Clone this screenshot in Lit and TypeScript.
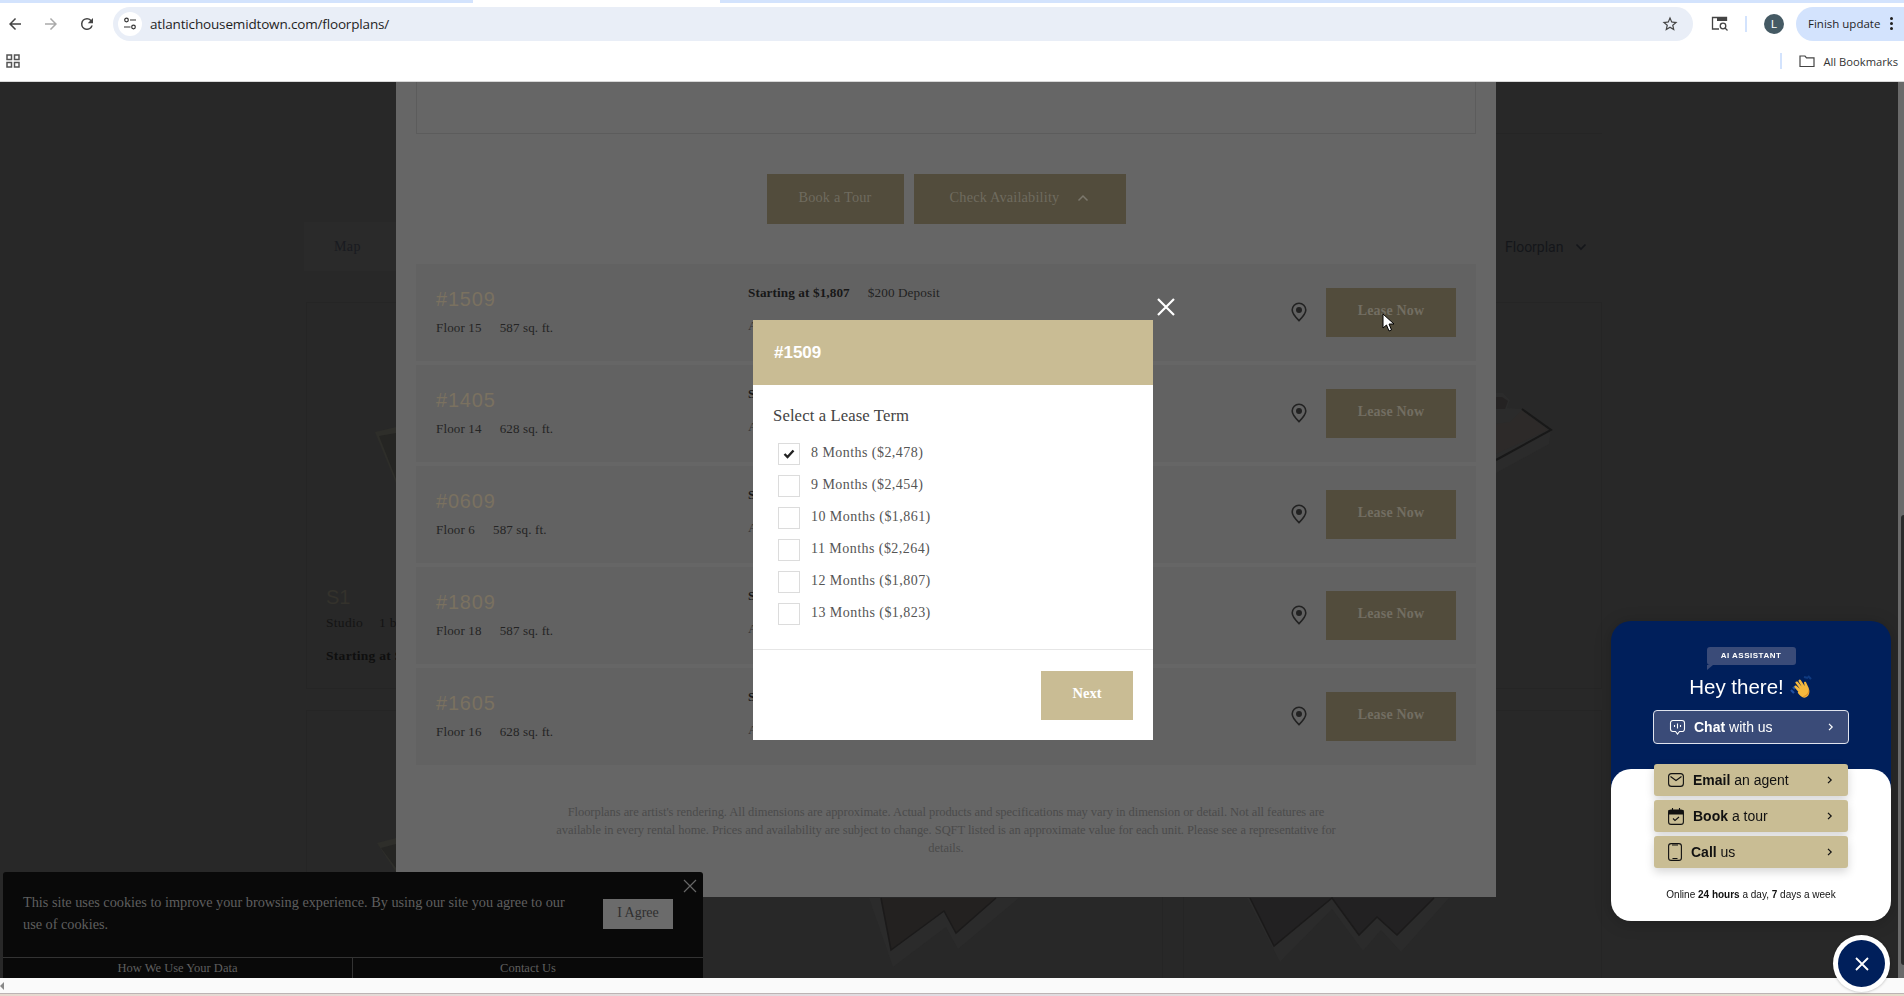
import { LitElement, html, css, svg } from "lit";
import { customElement } from "lit/decorators.js";

const units = [
  { id: "#1509", floor: "Floor 15", sq: "587 sq. ft." },
  { id: "#1405", floor: "Floor 14", sq: "628 sq. ft." },
  { id: "#0609", floor: "Floor 6", sq: "587 sq. ft." },
  { id: "#1809", floor: "Floor 18", sq: "587 sq. ft." },
  { id: "#1605", floor: "Floor 16", sq: "628 sq. ft." },
];
const terms = [
  "8 Months ($2,478)",
  "9 Months ($2,454)",
  "10 Months ($1,861)",
  "11 Months ($2,264)",
  "12 Months ($1,807)",
  "13 Months ($1,823)",
];

const chev = html`<svg class="chev" width="6" height="8" viewBox="0 0 6 8"><path d="M1 .8l3.200 3.200L1 7.200" fill="none" stroke="currentColor" stroke-width="1.200"/></svg>`;
const pin = html`<svg width="16" height="20" viewBox="0 0 16 20"><path d="M8 1.200A6.800 6.800 0 0 0 1.200 8c0 3.900 3.600 7.400 6.800 10.600C11.200 15.400 14.800 11.900 14.800 8A6.800 6.800 0 0 0 8 1.200z" fill="none" stroke="#222" stroke-width="1.600"/><circle cx="8" cy="8" r="3" fill="#222"/></svg>`;

@customElement("app-root")
export class AppRoot extends LitElement {
  static styles = css`
    :host { display: block; width: 1904px; height: 996px; overflow: hidden; position: relative; background: #fff; font-family: "Liberation Serif", serif; }
    * { box-sizing: border-box; }
    .strip { height: 3px; background: linear-gradient(90deg, #d3e3fd 0 473px, #fff 473px 720px, #d3e3fd 720px 1904px); }
    .toolbar { height: 40px; display: flex; align-items: center; padding: 2px 0 0 6px; background: #fff; }
    .nav { width: 36px; display: flex; align-items: center; }
    .address { margin-left: -1px; width: 1580px; height: 34px; border-radius: 17px; background: #e9eef7; display: flex; align-items: center; padding: 0 14px 0 5px; }
    .tune { width: 24px; height: 24px; border-radius: 50%; background: #fff; display: flex; align-items: center; justify-content: center; }
    .url { margin-left: 8px; font: 13.500px "Open Sans", sans-serif; letter-spacing: -0.16px; color: #1f1f1f; flex: 1; }
    .lens { margin-left: 18px; }
    .sep { width: 2px; height: 16px; background: #d3e3fd; margin: 0 17px 0 16px; }
    .avatar { width: 20px; height: 20px; border-radius: 50%; background: #455a64; color: #fff; font: 11px "Liberation Sans", sans-serif; display: flex; align-items: center; justify-content: center; }
    .update { margin-left: 12px; flex: 1; height: 34px; border-radius: 17px 0 0 17px; background: #d3e3fd; display: flex; align-items: center; padding: 0 0 1px 12px; font: 11.500px "Open Sans", sans-serif; color: #1f1f1f; gap: 10px; white-space: nowrap; }
    .dots { display: flex; flex-direction: column; gap: 2px; }
    .dots i { width: 3px; height: 3px; border-radius: 50%; background: #1f1f1f; display: block; }
    .bookmarks { height: 39px; display: flex; align-items: center; padding: 0 6px 2px; border-bottom: 1px solid #d8d8d8; background: #fff; }
    .bm-right { margin-left: auto; display: flex; align-items: center; font: 11.200px "Open Sans", sans-serif; color: #333; gap: 8px; }
    .bm-sep { width: 2px; height: 16px; background: #d3e3fd; margin-right: 9px; }

    .page { position: relative; height: 896px; background: #282828; overflow: hidden; display: flex; }
    .canvas { position: absolute; inset: 0; }
    .scrollv { position: absolute; right: 0; top: 0; bottom: 0; width: 6px; background: #6a6a6a; }
    .scrollv i { position: absolute; left: 3px; right: 0; top: 433px; height: 450px; background: #2a2a2a; border-radius: 3px 0 0 3px; display: block; }
    .tab-map { position: absolute; left: 304px; top: 140px; width: 92px; height: 49px; background: #2a2a2a; font-size: 14px; color: #191a20; display: flex; align-items: center; padding-left: 30px; letter-spacing: .4px; }
    .floorsel { position: absolute; left: 1505px; top: 157px; display: flex; align-items: center; gap: 12px; font: 14px Roboto, sans-serif; color: #14161a; }
    .s1 { position: absolute; left: 326px; top: 503px; color: #141414; font-size: 13.500px; letter-spacing: .3px; white-space: nowrap; }
    .s1 .code { font: 20px "Liberation Sans", sans-serif; color: #34322c; line-height: 24px; margin: 0; letter-spacing: 0; }
    .s1 .info { margin-top: 6px; display: flex; gap: 16px; }
    .s1 .start { margin-top: 17px; font-weight: 700; color: #0f0f0f; }

    .panel { position: relative; margin-left: 396px; width: 1100px; height: 815px; background: #666; padding: 0 20px; display: flex; flex-direction: column; }
    .topbox { height: 52px; border: 1px solid #5c5c5c; border-top: 0; }
    .cta { display: flex; justify-content: center; gap: 10px; margin-top: 40px; }
    .cta div { height: 50px; background: #524c3c; color: #6f6b5f; font-size: 14.300px; letter-spacing: .18px; display: flex; align-items: center; justify-content: center; padding-bottom: 3px; }
    .cta .tour { width: 137px; }
    .cta .check { width: 212px; gap: 18px; }
    .rows { margin-top: 40px; display: flex; flex-direction: column; gap: 4px; }
    .row { height: 97px; background: #626262; display: flex; align-items: flex-start; padding: 24px 20px 0; }
    .col1 { width: 312px; flex: none; color: #242424; }
    .code { font: 20px "Liberation Sans", sans-serif; letter-spacing: .8px; color: #7a7160; line-height: 24px; margin-top: -1px; }
    .meta { display: flex; gap: 18px; margin-top: 9px; font-size: 13px; letter-spacing: .15px; }
    .col2 { width: 543px; flex: none; margin-top: -5px; color: #222; font-size: 13.200px; letter-spacing: .1px; }
    .col2 .l1 { display: flex; gap: 18px; height: 20px; align-items: center; }
    .col2 b { color: #181818; }
    .col2 .l2 { margin-top: 15px; color: #333; }
    .pinbox { width: 35px; flex: none; margin-top: 14px; height: 20px; }
    .lease { width: 130px; flex: none; height: 49px; background: #524c3c; color: #726e62; font-size: 14px; letter-spacing: .2px; font-weight: 700; display: flex; align-items: center; justify-content: center; padding-bottom: 4px; }
    .legal { margin-top: 38px; text-align: center; font-size: 12.500px; line-height: 18px; letter-spacing: -.06px; color: #4b4b4b; white-space: nowrap; }

    .modal { position: absolute; left: 753px; top: 238px; width: 400px; height: 420px; background: #fff; display: flex; flex-direction: column; }
    .m-head { height: 65px; background: #c9bc94; color: #fff; font: 700 17px "Liberation Sans", sans-serif; display: flex; align-items: center; padding-left: 21px; flex: none; }
    .m-body { height: 265px; padding: 20px 20px 0; border-bottom: 1px solid #e6e6e6; flex: none; }
    .m-title { font-size: 16.700px; color: #444; line-height: 22px; letter-spacing: .1px; }
    .terms { margin-top: 16px; padding-left: 5px; display: flex; flex-direction: column; gap: 10px; }
    .term { display: flex; align-items: center; gap: 11px; height: 22px; font-size: 14px; color: #555; letter-spacing: .45px; }
    .box { width: 22px; height: 22px; border: 1px solid #dcdcdc; display: flex; align-items: center; justify-content: center; flex: none; }
    .term span { margin-top: -3px; }
    .m-foot { flex: 1; display: flex; justify-content: flex-end; padding: 21px 20px 0 0; }
    .next { width: 92px; height: 49px; background: #c9bc94; color: #fff; font-size: 14.500px; font-weight: 700; display: flex; align-items: center; justify-content: center; padding-bottom: 4px; }
    .m-close { position: absolute; left: 1156px; top: 215px; }
    .cursor { position: absolute; left: 1382px; top: 231px; }

    .cookie { position: absolute; left: 3px; top: 790px; width: 700px; height: 106px; background: #090909; border-radius: 3px 3px 0 0; display: flex; flex-direction: column; color: #5f5f5f; }
    .c-main { flex: 1; display: flex; padding: 19px 30px 0 20px; position: relative; }
    .c-text { width: 580px; padding-right: 25px; font-size: 14.300px; line-height: 22px; letter-spacing: -.02px; }
    .agree { width: 70px; height: 30px; margin-top: 8px; background: #6b6b6b; color: #2f2f2f; font-size: 14px; display: flex; align-items: center; justify-content: center; padding-bottom: 2px; }
    .c-x { position: absolute; right: 6px; top: 7px; }
    .c-links { height: 21px; border-top: 1px solid #333; display: flex; font-size: 12.500px; }
    .c-links div { display: flex; justify-content: center; align-items: center; }
    .c-links div:first-child { width: 350px; border-right: 1px solid #333; }
    .c-links div:last-child { flex: 1; }

    .widget { position: absolute; left: 1611px; top: 539px; width: 280px; height: 300px; display: flex; flex-direction: column; font-family: "Liberation Sans", sans-serif; filter: drop-shadow(0 2px 8px rgba(0,0,0,.2)); }
    .w-head { height: 168px; margin-bottom: -20px; background: #001f5b; border-radius: 20px 20px 0 0; display: flex; flex-direction: column; align-items: center; padding-top: 26px; flex: none; }
    .badge { position: relative; width: 89px; height: 18px; background: #3a4b78; border-radius: 3px; color: #fff; font: 700 8px "Liberation Sans", sans-serif; letter-spacing: .5px; display: flex; align-items: center; justify-content: center; padding-bottom: 2px; }
    .badge::after { content: ""; position: absolute; left: 0; top: 18px; border-right: 6px solid transparent; border-top: 5px solid #3a4b78; }
    .hey { margin-top: 5px; height: 34px; display: flex; align-items: center; gap: 5px; font-size: 20.500px; color: #fff; padding-left: 2px; }
    .chat { margin-top: 6px; width: 196px; height: 34px; border: 1px solid #dfe3ee; border-radius: 4px; background: #3a4b78; color: #fff; display: flex; align-items: center; padding: 0 14px 0 15px; font-size: 14px; gap: 8px; }
    .chev { margin-left: auto; flex: none; }
    .w-body { position: relative; flex: 1; background: #fff; border-radius: 20px; display: flex; flex-direction: column; align-items: center; }
    .btns { margin-top: -5px; display: flex; flex-direction: column; gap: 4px; width: 194px; }
    .btn { height: 32px; border-radius: 3px; background: #c9bd94; color: #111; display: flex; align-items: center; gap: 9px; padding: 0 15px 0 14px; font-size: 14px; box-shadow: 0 4px 10px rgba(0,0,0,.16); }
    .w-foot { margin-top: 21px; font-size: 10px; color: #111; }
    .fab { position: absolute; left: 1833px; top: 935px; width: 57px; height: 57px; border-radius: 50%; background: #fff; box-shadow: 0 0 3px rgba(0,0,0,.3); display: flex; align-items: center; justify-content: center; }
    .fab div { width: 47px; height: 47px; border-radius: 50%; background: #001f5b; display: flex; align-items: center; justify-content: center; }

    .hscroll { height: 15px; background: #fafafa; display: flex; align-items: center; }
    .hscroll i { width: 0; height: 0; border-top: 4px solid transparent; border-bottom: 4px solid transparent; border-right: 4px solid #888; display: block; }
    .tail { height: 3px; background: linear-gradient(90deg, #e6d9cf, #e0dbe2 50%, #e4dccb); border-top: 1px solid #bcb4b4; }
  `;

  render() {
    return html`
      <div class="strip"></div>
      <div class="toolbar">
        <div class="nav"><svg width="18" height="18" viewBox="0 0 24 24"><path d="M20 11H7.830l5.590-5.590L12 4l-8 8 8 8 1.410-1.410L7.830 13H20z" fill="#444"/></svg></div>
        <div class="nav"><svg width="18" height="18" viewBox="0 0 24 24"><path d="M4 11h12.170l-5.590-5.590L12 4l8 8-8 8-1.410-1.410L16.170 13H4z" fill="#aaa"/></svg></div>
        <div class="nav"><svg width="18" height="18" viewBox="0 0 24 24"><path d="M17.650 6.350A7.950 7.950 0 0 0 12 4a8 8 0 1 0 7.730 10h-2.080A6 6 0 1 1 12 6c1.660 0 3.140.69 4.220 1.780L13 11h7V4z" fill="#444"/></svg></div>
        <div class="address">
          <div class="tune"><svg width="14" height="14" viewBox="0 0 14 14" fill="none" stroke="#333" stroke-width="1.200"><circle cx="3.500" cy="3" r="1.800"/><path d="M7 3h6M1 10h6.500"/><circle cx="10.500" cy="10" r="1.800"/></svg></div>
          <div class="url">atlantichousemidtown.com/floorplans/</div>
          <svg width="18" height="18" viewBox="0 0 24 24"><path d="M22 9.240l-7.190-.62L12 2 9.190 8.630 2 9.240l5.460 4.730L5.820 21 12 17.270 18.180 21l-1.630-7.030L22 9.240zM12 15.400l-3.760 2.270 1-4.280-3.320-2.880 4.380-.38L12 6.100l1.710 4.040 4.380.38-3.320 2.880 1 4.280L12 15.400z" fill="#444"/></svg>
        </div>
        <svg class="lens" width="18" height="16" viewBox="0 0 18 16" fill="none" stroke="#444" stroke-width="1.300"><path d="M8 13H1.500V1.500h14V5"/><path d="M6 2h10v3H6z" fill="#444" stroke="none"/><circle cx="12" cy="10" r="2.800"/><path d="M14 12l2.500 2.500"/></svg>
        <div class="sep"></div>
        <div class="avatar">L</div>
        <div class="update">Finish update <span class="dots"><i></i><i></i><i></i></span></div>
      </div>
      <div class="bookmarks">
        <svg width="14" height="14" viewBox="0 0 14 14" fill="none" stroke="#555" stroke-width="1.500"><rect x="1" y="1" width="4.500" height="4.500"/><rect x="8.500" y="1" width="4.500" height="4.500"/><rect x="1" y="8.500" width="4.500" height="4.500"/><rect x="8.500" y="8.500" width="4.500" height="4.500"/></svg>
        <div class="bm-right">
          <div class="bm-sep"></div>
          <svg width="16" height="14" viewBox="0 0 16 14" fill="none" stroke="#444" stroke-width="1.200"><path d="M1 12.500V2h5l1.500 1.800H15v8.700z"/></svg>
          <span>All Bookmarks</span>
        </div>
      </div>
      <div class="page">
        <svg class="canvas" width="1904" height="896" viewBox="0 82 1904 896">
          ${svg`
          <g fill="none" stroke="#252525"><rect x="306.500" y="302.500" width="1295" height="386"/><rect x="306.500" y="710.500" width="1295" height="400"/><path d="M1162.500 710v270M1183.500 710v270M1162.500 302v386M1183.500 302v386"/></g>
          <path d="M1496 133.500h106" stroke="#252525"/>
          <path d="M375 432l21-5v56z" fill="#2e2e2a"/><path d="M379 436l17-3v46z" fill="#252523"/>
          <path d="M377 843l19-5v34z" fill="#2e2e2a"/><path d="M381 848l15-4v24z" fill="#252523"/>
          <path d="M1496 393h7l7 7-3 8 15 1 29 21-2 14-53 29z" fill="#2b2b2b"/>
          <path d="M1496 397l6 0 6 4-3 8h-9z" fill="#242222"/><path d="M1522 410l26 20-52 24v-30l14-2z" fill="#2d2a29"/><path d="M1522 409l29 21-55 30" fill="none" stroke="#181818" stroke-width="2"/>
          <path d="M869 898l24 69 53-40 12 22 61-51z" fill="#2b2b2b"/><path d="M881 898l10 52 53-39 12 22 40-35z" fill="#232120"/><path d="M881 898l10 52 53-39 12 22 40-35" fill="none" stroke="#1b1a1a" stroke-width="1.500"/>
          <path d="M1247 898l33 64 52-53 31 42 18-21 20 22 48-54z" fill="#2b2b2b"/><path d="M1250 898l24 48 58-48 27 37 18-18 20 18 37-37z" fill="#222122"/><path d="M1250 898l24 48 58-48 27 37 18-18 20 18 37-37" fill="none" stroke="#1b1a1a" stroke-width="1.500"/>
          `}
        </svg>
        <div class="tab-map">Map</div>
        <div class="floorsel">Floorplan <svg width="12" height="8" viewBox="0 0 12 8"><path d="M1.500 1.500L6 6l4.500-4.500" fill="none" stroke="#14161a" stroke-width="1.600"/></svg></div>
        <div class="s1"><div class="code">S1</div><div class="info"><span>Studio</span><span>1 bath</span></div><div class="start">Starting at $1,807</div></div>

        <div class="panel">
          <div class="topbox"></div>
          <div class="cta">
            <div class="tour">Book a Tour</div>
            <div class="check">Check Availability <svg width="12" height="8" viewBox="0 0 12 8"><path d="M1.500 6.500L6 2l4.500 4.500" fill="none" stroke="#7b776c" stroke-width="1.500"/></svg></div>
          </div>
          <div class="rows">
            ${units.map(
              (u) => html`<div class="row">
                <div class="col1">
                  <div class="code">${u.id}</div>
                  <div class="meta"><span>${u.floor}</span><span>${u.sq}</span></div>
                </div>
                <div class="col2">
                  <div class="l1"><b>Starting at $1,807</b><span>$200 Deposit</span></div>
                  <div class="l2">Available Oct 13</div>
                </div>
                <div class="pinbox">${pin}</div>
                <div class="lease">Lease Now</div>
              </div>`
            )}
          </div>
          <div class="legal">Floorplans are artist's rendering. All dimensions are approximate. Actual products and specifications may vary in dimension or detail. Not all features are<br>available in every rental home. Prices and availability are subject to change. SQFT listed is an approximate value for each unit. Please see a representative for<br>details.</div>
        </div>

        <svg class="cursor" width="13" height="19" viewBox="0 0 13 19"><path d="M1 1v14l3.500-3 2.500 6 2.500-1-2.500-6H12z" fill="#fff" stroke="#000" stroke-width="1"/></svg>
        <svg class="m-close" width="20" height="20" viewBox="0 0 20 20"><path d="M2 2l16 16M18 2L2 18" stroke="#fff" stroke-width="2.200"/></svg>
        <div class="modal">
          <div class="m-head">#1509</div>
          <div class="m-body">
            <div class="m-title">Select a Lease Term</div>
            <div class="terms">
              ${terms.map(
                (t, i) => html`<div class="term"><div class="box">${i === 0 ? html`<svg width="12" height="10" viewBox="0 0 12 10"><path d="M1.500 5l3 3 6-6.500" fill="none" stroke="#222" stroke-width="2.400"/></svg>` : ""}</div><span>${t}</span></div>`
              )}
            </div>
          </div>
          <div class="m-foot"><div class="next">Next</div></div>
        </div>

        <div class="cookie">
          <div class="c-main">
            <div class="c-text">This site uses cookies to improve your browsing experience. By using our site you agree to our use of cookies.</div>
            <div class="agree">I Agree</div>
            <svg class="c-x" width="14" height="14" viewBox="0 0 14 14"><path d="M1 1l12 12M13 1L1 13" stroke="#666" stroke-width="1.200"/></svg>
          </div>
          <div class="c-links"><div>How We Use Your Data</div><div>Contact Us</div></div>
        </div>

        <div class="widget">
          <div class="w-head">
            <div class="badge">AI ASSISTANT</div>
            <div class="hey">Hey there!
              <svg width="26" height="24" viewBox="0 0 26 24">
                <path d="M2 15l3 3M4 12l2 2" stroke="#1f4fa0" stroke-width="2.200"/><path d="M15 2l4 1M19 1l3 3" stroke="#0f3a80" stroke-width="2.200"/>
                <g transform="rotate(-30 14 13)"><path d="M8 14l-1-6c0-1.500 2-1.500 2.500 0L11 12l-1-7c0-1.500 2-1.500 2.500 0l1 6 0-6c.5-1.500 2.500-1.500 2.500 0l.5 7 1-3c.5-1 2-.5 2 .5l-.5 6c-.5 4-3 7-6.500 7s-5-3-5.500-8z" fill="#f5b83d"/><path d="M9 20c2 2 6 2 8-.5 1-1.500 1.500-3 2-5-1 3-3 6-6 6-1.500 0-3-.2-4-.5z" fill="#e08a22"/></g>
              </svg>
            </div>
            <div class="chat">
              <svg width="17" height="17" viewBox="0 0 17 17" fill="none" stroke="#fff" stroke-width="1.100"><path d="M4 1.500h9a2.500 2.500 0 0 1 2.500 2.500v6a2.500 2.500 0 0 1-2.500 2.500h-2.500L8.500 15l-2-2.500H4A2.500 2.500 0 0 1 1.500 10V4A2.500 2.500 0 0 1 4 1.500z"/><path d="M5.500 6v2M8.500 4.500v5M11.500 6v2"/></svg>
              <span><b>Chat</b> with us</span>${chev}
            </div>
          </div>
          <div class="w-body">
            <div class="btns">
              <div class="btn">
                <svg width="16" height="14" viewBox="0 0 16 14" fill="none" stroke="#111" stroke-width="1.100"><rect x=".6" y=".6" width="14.800" height="12.800" rx="3"/><path d="M2.500 3.500L8 7.500l5.500-4"/></svg>
                <span><b>Email</b> an agent</span>${chev}
              </div>
              <div class="btn">
                <svg width="16" height="18" viewBox="0 0 16 18" fill="none" stroke="#111" stroke-width="1.100"><rect x=".6" y="3" width="14.800" height="14.400" rx="2.500"/><path d="M1 3.500h14V7H1z" fill="#111"/><path d="M4.500 1v3M11.500 1v3"/><path d="M5 11.500l2 2 4-3.500"/></svg>
                <span><b>Book</b> a tour</span>${chev}
              </div>
              <div class="btn">
                <svg width="14" height="18" viewBox="0 0 14 18" fill="none" stroke="#111" stroke-width="1.100"><rect x=".6" y=".6" width="12.800" height="16.800" rx="2.500"/><path d="M4 2h6M4.500 15.500h5"/></svg>
                <span><b>Call</b> us</span>${chev}
              </div>
            </div>
            <div class="w-foot">Online <b>24 hours</b> a day, <b>7</b> days a week</div>
          </div>
        </div>

        <div class="scrollv"><i></i></div>
      </div>
      <div class="hscroll"><i></i></div>
      <div class="tail"></div>
      <div class="fab"><div><svg width="14" height="14" viewBox="0 0 14 14"><path d="M1 1l12 12M13 1L1 13" stroke="#fff" stroke-width="1.800"/></svg></div></div>
    `;
  }
}
